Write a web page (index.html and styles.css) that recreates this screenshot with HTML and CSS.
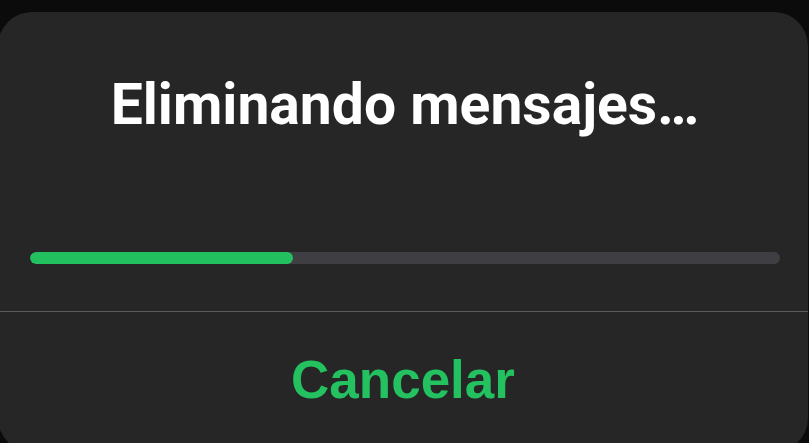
FILE: index.html
```html
<!DOCTYPE html>
<html lang="es">
<head>
<meta charset="utf-8">
<link rel="stylesheet" href="styles.css">
</head>
<body>
<div class="screen">
  <div class="sheet">
    <div class="body">
      <h1 class="title">Eliminando mensajes…</h1>
      <div class="track"><div class="fill" style="width:35%"></div></div>
    </div>
    <div class="divider"></div>
    <div class="action">Cancelar</div>
  </div>
</div>
</body>
</html>
```
FILE: styles.css
```css
html, body {
  margin: 0;
  padding: 0;
  background: #0b0b0b;
  width: 809px;
  height: 443px;
  overflow: hidden;
}
.screen {
  padding-top: 4px;
  margin-left: -2px;
  width: 810px;
  border-top: 8px solid #0b0b0b;
  box-sizing: border-box;
}
.sheet {
  background: #262626;
  border-radius: 34px;
  height: 440px;
  display: flex;
  flex-direction: column;
}
.body {
  padding: 0 28px 0 32px;
}
.title {
  margin: 0;
  padding-top: 63px;
  font-family: Roboto, "Liberation Sans", sans-serif;
  font-weight: 700;
  font-size: 57px;
  line-height: 60px;
  color: #ffffff;
  text-align: center;
}
.track {
  margin-top: 117px;
  height: 12px;
  border-radius: 6px;
  background: #3f3e43;
  overflow: hidden;
}
.fill {
  height: 100%;
  background: #22c05e;
  border-radius: 6px;
}
.divider {
  margin-top: 47px;
  height: 1px;
  background: #5b5b5b;
}
.action {
  padding-top: 38px;
  font-family: "Liberation Sans", Arial, sans-serif;
  font-weight: 700;
  font-size: 53px;
  line-height: 60px;
  color: #23c15f;
  text-align: center;
}
```
